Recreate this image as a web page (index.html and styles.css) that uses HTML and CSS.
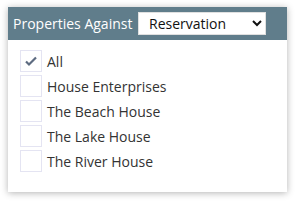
FILE: index.html
```html
<!DOCTYPE html>
<html lang="en">
<head>
    <meta charset="UTF-8">
    <title>Properties Against</title>
    <link rel="stylesheet" href="styles.css">
</head>
<body>
    <div class="panel">
        <div class="panel-header">
            <span class="panel-title">Properties Against</span>
            <select class="panel-select">
                <option>Reservation</option>
                <option>Owner</option>
            </select>
        </div>
        <ul class="check-list">
            <li class="check-item">
                <span class="check-box">
                    <svg width="14" height="12" viewBox="0 0 14 12"><polyline points="2,6.5 5,9.5 12,2.5" fill="none" stroke="#5d6b80" stroke-width="2.2"/></svg>
                </span>
                All
            </li>
            <li class="check-item"><span class="check-box"></span>House Enterprises</li>
            <li class="check-item"><span class="check-box"></span>The Beach House</li>
            <li class="check-item"><span class="check-box"></span>The Lake House</li>
            <li class="check-item"><span class="check-box"></span>The River House</li>
        </ul>
    </div>
</body>
</html>
```

FILE: styles.css
```css
body {
    margin: 0;
    padding: 7px 9px 10px 8px;
    font-family: "Open Sans", sans-serif;
    background: #fff;
}

.panel {
    background: #fff;
    box-shadow: 0 1px 7px rgba(0, 0, 0, 0.3);
    height: 185px;
}

.panel-header {
    background: #607d8b;
    height: 33px;
    display: flex;
    align-items: center;
    padding-left: 5px;
}

.panel-title {
    color: #fff;
    font-size: 14px;
    width: 125px;
    white-space: nowrap;
}

.panel-select {
    width: 128px;
    height: 23px;
    font-family: "Open Sans", sans-serif;
    font-size: 14px;
    color: #111;
    background: #fff;
    border: 1px solid #e0e0e0;
    border-radius: 0;
    padding: 0 0 0 6px;
}

.check-list {
    list-style: none;
    margin: 0;
    padding: 10px 0 0 12px;
}

.check-item {
    display: flex;
    align-items: center;
    height: 22px;
    margin-bottom: 3px;
    font-size: 14px;
    color: #333;
}

.check-box {
    box-sizing: border-box;
    width: 22px;
    height: 22px;
    border: 1px solid #e4e4f2;
    margin-right: 5px;
    display: flex;
    align-items: center;
    justify-content: center;
}
```
